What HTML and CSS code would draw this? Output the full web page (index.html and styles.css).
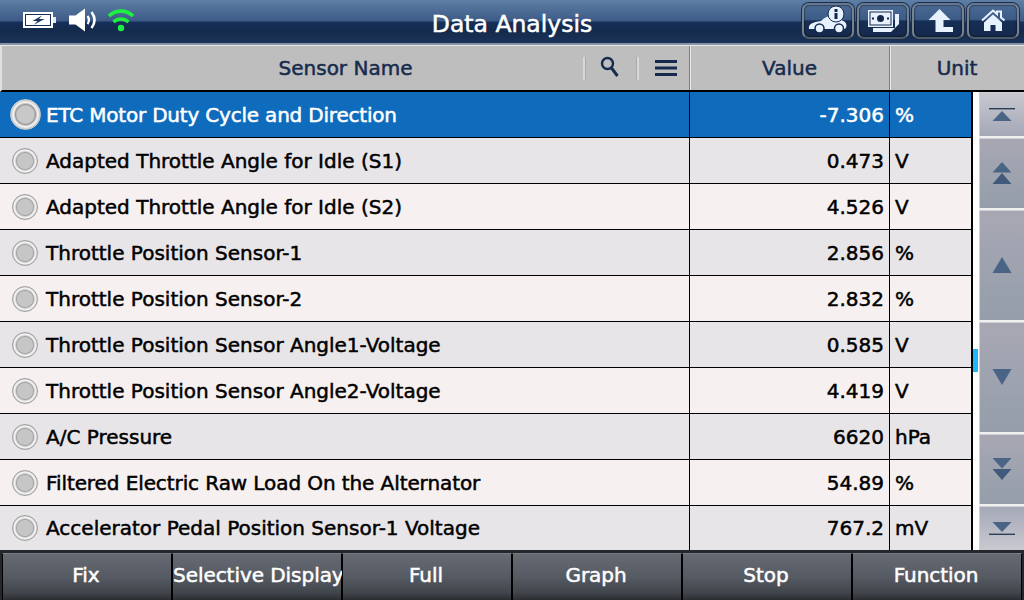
FILE: index.html
```html
<!DOCTYPE html>
<html lang="en">
<head>
<meta charset="utf-8">
<title>Data Analysis</title>
<link rel="stylesheet" href="styles.css">
</head>
<body>
<div class="screen">
  <header class="topbar">
    <div class="status">
      <svg class="ic-batt" width="33" height="16" viewBox="0 0 33 16"><rect x="0" y="0" width="30" height="16" fill="#fff"/><rect x="2" y="2" width="26" height="12" fill="#16305a"/><rect x="3" y="3" width="24" height="10" fill="#fff"/><path d="M19 3.500 9.500 9h5L11 12.800 21.500 7H16z" fill="#1c3558"/><rect x="30" y="5" width="3" height="6" fill="#dfe6ee"/></svg>
      <svg class="ic-vol" width="28" height="24" viewBox="0 0 28 24"><path d="M0 7.500h6.500L16 .5v23l-9.500-7H0z" fill="#fff"/><path d="M18.500 8c1.800 2.500 1.800 5.500 0 8" fill="none" stroke="#fff" stroke-width="2.200"/><path d="M22.500 4c3.800 5 3.800 11 0 16" fill="none" stroke="#fff" stroke-width="2.600"/></svg>
      <svg class="ic-wifi" width="28" height="24" viewBox="0 0 28 24"><path d="M2 8c7-6.500 17-6.500 24 0" fill="none" stroke="#1df03f" stroke-width="3.600"/><path d="M6.500 14c4.500-4 10.500-4 15 0" fill="none" stroke="#1df03f" stroke-width="3.600"/><circle cx="14" cy="20" r="3.200" fill="#1df03f"/></svg>
    </div>
    <h1 class="title">Data Analysis</h1>
    <nav class="tools">
      <button class="tool"><svg width="42" height="30" viewBox="0 0 42 30"><path d="M2 23C1 18 6 16 14 15c4-4 8-6 13-5l11 6c2 2 2 5 0 7z" fill="#e8f2ff"/><circle cx="12.500" cy="22.500" r="4.500" fill="#e8f2ff" stroke="#14294a" stroke-width="1.500"/><circle cx="32" cy="22.500" r="4.500" fill="#e8f2ff" stroke="#14294a" stroke-width="1.500"/><circle cx="29" cy="8" r="8" fill="#e8f2ff" stroke="#14294a" stroke-width="1"/><rect x="27.500" y="7" width="3" height="6" fill="#14294a"/><rect x="27.500" y="3" width="3" height="3" fill="#14294a"/></svg></button>
      <button class="tool"><svg width="34" height="28" viewBox="0 0 34 28"><path d="M7 25h26V7h-4v14H7z" fill="#e8f2ff"/><path d="M25 25l8-8v8z" fill="#14294a"/><rect x="2" y="3" width="25" height="17" fill="#e8f2ff"/><rect x="4" y="5" width="21" height="13" fill="none" stroke="#14294a" stroke-width="1"/><circle cx="14.500" cy="11.500" r="3.500" fill="#14294a"/><rect x="6" y="10.500" width="2" height="2" fill="#14294a"/><rect x="21" y="10.500" width="2" height="2" fill="#14294a"/></svg></button>
      <button class="tool"><svg width="32" height="28" viewBox="0 0 32 28"><path d="M17.500 2 6.500 13h7v12H31v-5H21.500v-7h7z" fill="#e8f2ff"/></svg></button>
      <button class="tool"><svg width="30" height="28" viewBox="0 0 30 28"><path d="M4 13.500 15 3.500l4 3.500V4.500h4V10.500l3.500 3" fill="none" stroke="#e8f2ff" stroke-width="2"/><path d="M15 7.500 24 15.500V24h-6.500v-6h-5v6H6V15.500z" fill="#e8f2ff"/></svg></button>
    </nav>
  </header>

  <div class="main">
    <div class="row head">
      <div class="cell c-name head-name">
        <span class="head-label">Sensor Name</span>
        <span class="head-tools">
          <svg class="search-ic" width="19" height="22" viewBox="0 0 19 22"><circle cx="7.500" cy="7.500" r="5.500" fill="none" stroke="#172b4d" stroke-width="2.400"/><path d="M11.500 12l6 8" stroke="#172b4d" stroke-width="3"/></svg>
          <span class="divider"></span>
          <svg class="menu-ic" width="22" height="16" viewBox="0 0 22 16"><path d="M0 1.500h22M0 8h22M0 14.500h22" stroke="#172b4d" stroke-width="3"/></svg>
        </span>
      </div>
      <div class="cell c-val head-c">Value</div>
      <div class="cell c-unit head-c">Unit</div>
    </div>
    <div class="body">
      <div class="table">
        <div class="row sel"><div class="cell c-name"><i class="dot"></i>ETC Motor Duty Cycle and Direction</div><div class="cell c-val">-7.306</div><div class="cell c-unit">%</div></div>
        <div class="row odd"><div class="cell c-name"><i class="dot"></i>Adapted Throttle Angle for Idle (S1)</div><div class="cell c-val">0.473</div><div class="cell c-unit">V</div></div>
        <div class="row even"><div class="cell c-name"><i class="dot"></i>Adapted Throttle Angle for Idle (S2)</div><div class="cell c-val">4.526</div><div class="cell c-unit">V</div></div>
        <div class="row odd"><div class="cell c-name"><i class="dot"></i>Throttle Position Sensor-1</div><div class="cell c-val">2.856</div><div class="cell c-unit">%</div></div>
        <div class="row even"><div class="cell c-name"><i class="dot"></i>Throttle Position Sensor-2</div><div class="cell c-val">2.832</div><div class="cell c-unit">%</div></div>
        <div class="row odd"><div class="cell c-name"><i class="dot"></i>Throttle Position Sensor Angle1-Voltage</div><div class="cell c-val">0.585</div><div class="cell c-unit">V</div></div>
        <div class="row even"><div class="cell c-name"><i class="dot"></i>Throttle Position Sensor Angle2-Voltage</div><div class="cell c-val">4.419</div><div class="cell c-unit">V</div></div>
        <div class="row odd"><div class="cell c-name"><i class="dot"></i>A/C Pressure</div><div class="cell c-val">6620</div><div class="cell c-unit">hPa</div></div>
        <div class="row even"><div class="cell c-name tight"><i class="dot"></i>Filtered Electric Raw Load On the Alternator</div><div class="cell c-val">54.89</div><div class="cell c-unit">%</div></div>
        <div class="row odd last"><div class="cell c-name"><i class="dot"></i>Accelerator Pedal Position Sensor-1 Voltage</div><div class="cell c-val">767.2</div><div class="cell c-unit">mV</div></div>
      </div>
      <div class="track"><span class="thumb"></span></div>
      <div class="scroller">
        <button class="sb end"><svg width="26" height="13" viewBox="0 0 26 13"><path d="M0 .7h26" stroke="#2c3e55" stroke-width="1.400"/><path d="M13 3 22.500 13h-19z" fill="#4a6485"/></svg></button>
        <button class="sb mid"><svg width="20" height="22" viewBox="0 0 20 22"><path d="M10 0l9.500 10.500H.5z" fill="#4a6485"/><path d="M10 11l9.500 11H.5z" fill="#41597a"/></svg></button>
        <button class="sb big"><svg width="20" height="16" viewBox="0 0 20 16"><path d="M10 0l9.500 16H.5z" fill="#4a6485"/></svg></button>
        <button class="sb big"><svg width="20" height="16" viewBox="0 0 20 16"><path d="M.5 0h19L10 16z" fill="#4a6485"/></svg></button>
        <button class="sb mid"><svg width="20" height="22" viewBox="0 0 20 22"><path d="M.5 0h19L10 10.500z" fill="#4a6485"/><path d="M.5 11h19L10 22z" fill="#41597a"/></svg></button>
        <button class="sb end"><svg width="26" height="13" viewBox="0 0 26 13"><path d="M3.500 0h19L13 10z" fill="#4a6485"/><path d="M0 12.300h26" stroke="#2c3e55" stroke-width="1.400"/></svg></button>
      </div>
    </div>
  </div>

  <footer class="bottombar">
    <button class="fn">Fix</button>
    <button class="fn">Selective Display</button>
    <button class="fn">Full</button>
    <button class="fn">Graph</button>
    <button class="fn">Stop</button>
    <button class="fn">Function</button>
  </footer>
</div>
</body>
</html>
```
FILE: styles.css
```css
* { box-sizing: border-box; }
html, body { margin: 0; padding: 0; }
body { width: 1024px; height: 600px; overflow: hidden; font-family: "DejaVu Sans", sans-serif; background: #fff; }
.screen { width: 1024px; height: 600px; display: flex; flex-direction: column; }

.topbar { height: 45px; flex: none; display: flex; align-items: flex-start; position: relative; padding: 0 5px 0 23px; border-bottom: 2px solid #8a93a3;
  background: linear-gradient(#5f7fa5 0, #3c5a86 21px, #17305a 22px, #142a4c 30px, #1b3358 43px); }
.status { display: flex; align-items: center; gap: 13px; height: 40px; }
.status svg { display: block; }
.ic-vol { margin-right: -3px; }
.title { position: absolute; left: 0; right: 0; top: 8px; margin: 0; text-align: center; color: #fff; font-size: 23.500px; line-height: 32px; font-weight: normal; -webkit-text-stroke: .5px #fff; }
.tools { margin-left: auto; display: flex; gap: 3px; padding-top: 3px; }
.tool { width: 52px; height: 36px; padding: 0; display: flex; align-items: center; justify-content: center; border: 2px solid #76838f; border-top-color: #66778e; border-bottom-color: #4f5a68; border-radius: 7px; background: linear-gradient(#4a6a94, #3c5c88 45%, #172f55 50%, #15294b); box-shadow: 0 0 0 1px #1a2d4c, inset 0 0 2px #000; }
.tool svg { display: block; }

.main { height: 505px; flex: none; display: flex; flex-direction: column; }
.body { flex: 1; display: flex; min-height: 0; }
.table { width: 973px; flex: none; display: flex; flex-direction: column; border-right: 2px solid #000; }
.row { display: flex; height: 46px; flex: none; font-size: 20px; color: #000; border-bottom: 1px solid #000; -webkit-text-stroke: .5px currentColor; }
.row.head { background: #bebebe; height: 47px; border-top: 1px solid #e8e8e8; border-left: 2px solid #e0e0e0; border-bottom: 2px solid #000; color: #172b4d; -webkit-text-stroke: .5px #172b4d; }
.row.sel { background: #0f6cbd; color: #fff; }
.row.sel .c-name { letter-spacing: -.2px; }
.row.odd { background: #e8e5e8; }
.row.even { background: #f7f0f0; }
.row.last { border-bottom: 0; height: 44px; }
.tight { letter-spacing: -.09px; }
.cell { display: flex; align-items: center; }
.c-name { width: 690px; padding-left: 12px; border-right: 1px solid #000; }
.c-val { width: 200px; justify-content: flex-end; padding-right: 5px; border-right: 1px solid #000; }
.c-unit { flex: 1; padding-left: 5px; }
.head .c-name { width: 688px; }
.head .c-name, .head .c-val { border-right: 1px solid #808080; box-shadow: 1px 0 0 #e8e8e8; }
.head-c { justify-content: center; padding: 0; }
.head .c-unit { padding: 0; }
.head-name { padding: 0; }
.head-label { width: 585px; height: 23px; display: flex; align-items: center; justify-content: center; border-right: 2px solid #d8d8d8; padding-left: 108px; margin-left: -2px; box-shadow: 1px 0 0 #aaa; }
.head-tools { display: flex; align-items: center; padding-left: 15px; }
.head-tools svg { display: block; }
.search-ic { margin-top: -3px; }
.divider { width: 2px; height: 23px; margin: 0 16px 0 18px; background: #d8d8d8; box-shadow: -1px 0 0 #aaa; }
.dot { width: 26px; height: 26px; flex: none; margin-right: 8px; border-radius: 50%; border: 1px solid #a0a0a0; background: radial-gradient(circle, #c6c6c6 0 7.500px, #a4a4a4 8.500px, #ececec 10px, #f2f2f2 11px, #a8a8a8 13px); }
.sel .dot { width: 31px; height: 31px; margin-left: -2px; margin-right: 5px; border-color: #d0d0d0; background: radial-gradient(circle, #c8c8c8 0 8.500px, #9a9a9a 10px, #f4f4f4 12px, #e8e8e8 13px, #a8a8a8 15.500px); }

.track { width: 6px; flex: none; background: #fff; position: relative; }
.thumb { position: absolute; left: 0; top: 257px; width: 5px; height: 23px; background: #1cb8fb; }
.scroller { flex: 1; display: flex; flex-direction: column; gap: 2px; background: #f0f0f0; }
.sb { padding: 0; display: flex; align-items: center; justify-content: center; border: 0; width: 45px; box-shadow: inset 1px 1px 0 #cfd0d6; }
.sb.end { height: 44px; background: linear-gradient(#c8c9d0, #a4a8b6); }
.sb.end:last-child { background: linear-gradient(#a4a8b6, #c8c9d0); }
.sb.mid { height: 70px; background: linear-gradient(#a8a8b4, #949eaa); }
.sb.big { height: 110px; background: linear-gradient(#a8a8b4, #949eaa); }
.sb svg { display: block; }

.bottombar { height: 50px; flex: none; display: flex; padding: 3px 2px 0 2px; background: #24282d; }
.fn { width: 170px; height: 47px; padding: 0 2px 4px 0; flex: none; font: 20px "DejaVu Sans", sans-serif; letter-spacing: -.05px; color: #fff; white-space: nowrap; border: 0; border-left: 1px solid #000; border-right: 1px solid #000; border-top: 1px solid #777b82; text-align: center; -webkit-text-stroke: .5px #fff; background: linear-gradient(#666a72, #565a62 50%, #40444b 85%, #2a2c30); }
```
